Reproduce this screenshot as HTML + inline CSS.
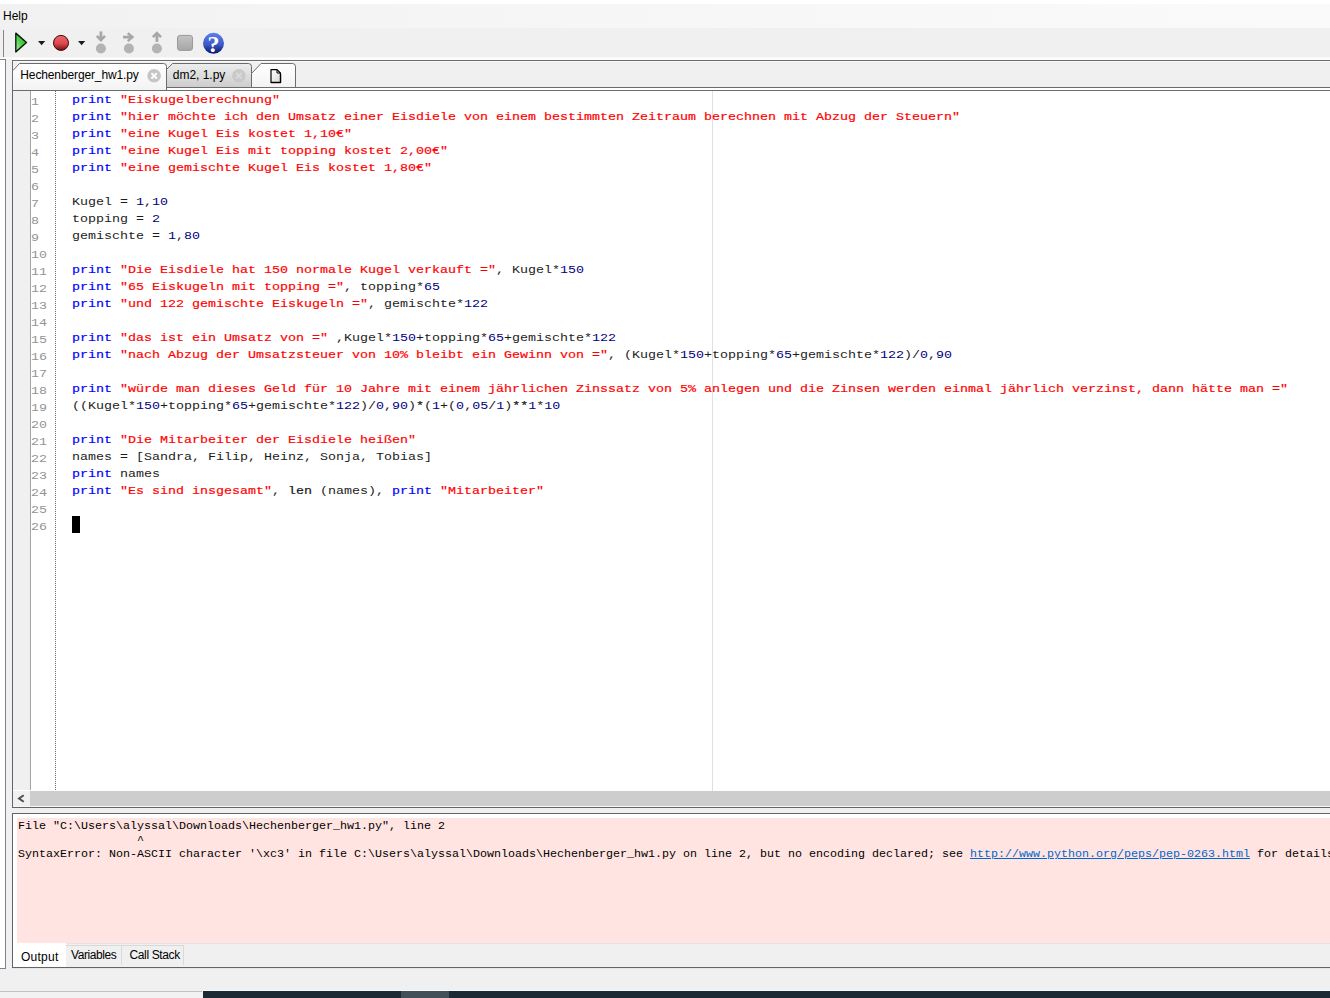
<!DOCTYPE html>
<html lang="de">
<head>
<meta charset="utf-8">
<title>Hechenberger_hw1.py</title>
<style>
*{box-sizing:border-box;margin:0;padding:0}
html,body{width:1330px;height:998px;overflow:hidden;background:#f0f0f0}
body{position:relative;font-family:"Liberation Sans",sans-serif;font-size:12px;color:#000}
.abs{position:absolute}
#topwhite{left:0;top:0;width:1330px;height:4px;background:#fff}
#menubar{left:0;top:4px;width:1330px;height:24px;background:linear-gradient(to right,#f1f1f1 0%,#f6f6f6 40%,#fafafa 100%)}
#menubar span{position:absolute;left:3px;top:5px;font-size:12px;line-height:14px}
#toolbar{left:0;top:28px;width:1330px;height:31px;background:#f0f0f0}
#leftpanel{left:0;top:59px;width:6px;height:910px;background:#fff;border-top:1px solid #7c8290;border-right:1px solid #7c8290;border-bottom:1px solid #7c8290;z-index:5}
/* editor frame */
#edframe{left:12px;top:60px;width:1330px;height:748px;border:1px solid #646464;background:#f0f0f0}
#editor{left:13px;top:91px;width:1317px;height:700px;background:#fff;overflow:hidden}
#edtop{left:13px;top:90px;width:1317px;height:1px;background:#646464}
#gutter{left:0;top:0;width:17px;height:699px;background:#f0f0f0;border-right:0}
#gutline{left:17px;top:0;width:1px;height:699px;background:#a4a4a4}
#dotted{left:42px;top:0;width:1px;height:699px;background:repeating-linear-gradient(to bottom,#6a6a6a 0,#6a6a6a 1px,#fff 1px,#fff 2px)}
#colmark{left:699px;top:0;width:1px;height:700px;background:#e0e0e0}
.ln{position:absolute;left:18px;width:30px;height:17px;margin-top:2px;font:11.5px/17px "Liberation Mono",monospace;color:#949494;white-space:pre;transform:scaleX(1.1593);transform-origin:0 0}
.cl{position:absolute;left:58.5px;height:17px;margin-top:1px;font:11px/17px "Liberation Mono",monospace;color:#1c1c1c;white-space:pre;transform:scaleX(1.2119);transform-origin:0 0}
.k{color:#0000ff;-webkit-text-stroke:.17px #0000ff}
.s{color:#ff0000;-webkit-text-stroke:.17px #ff0000}
.n{color:#000080}
.b{-webkit-text-stroke:.17px #000}
#caret{left:59px;top:425px;width:8px;height:17px;background:#000}
/* hscroll */
#hscroll{left:13px;top:791px;width:1317px;height:15px;background:#cdcdcd}
#hsbtn{left:0;top:0;width:17px;height:15px;background:#f0f0f0}
/* output frame */
#outframe{left:12px;top:813px;width:1330px;height:155px;border:1px solid #646464;background:#fff}
#outpink{left:17px;top:818px;width:1313px;height:125px;background:#ffe4e1}
.ol{position:absolute;left:18.3px;height:14px;font:10px/14px "Liberation Mono",monospace;color:#000;white-space:pre;transform:scaleX(1.1665);transform-origin:0 0}
.ol .lnk{color:#0066cc;text-decoration:underline}
#outtabs{left:13px;top:943px;width:1317px;height:24px;background:#f0f0f0}
#bottomstrip{left:203px;top:991px;width:1127px;height:7px;background:#1c2a35}
</style>
</head>
<body>
<div id="topwhite" class="abs"></div>
<div id="menubar" class="abs"><span>Help</span></div>
<div id="toolbar" class="abs"></div>
<div id="leftpanel" class="abs"></div>
<div id="edframe" class="abs"></div>
<svg id="topsvg" class="abs" style="left:0;top:28px" width="1330" height="63" viewBox="0 28 1330 63">
<defs>
<linearGradient id="gPlay" x1="1" y1="0" x2="0" y2="1"><stop offset="0" stop-color="#26b426"/><stop offset="0.5" stop-color="#46cc46"/><stop offset="1" stop-color="#b8f0b4"/></linearGradient>
<linearGradient id="gRec" x1="0" y1="0" x2="0" y2="1"><stop offset="0" stop-color="#f2666c"/><stop offset="0.55" stop-color="#d9484c"/><stop offset="1" stop-color="#7c0d0d"/></linearGradient>
<linearGradient id="gStop" x1="0" y1="0" x2="0" y2="1"><stop offset="0" stop-color="#c4c4c4"/><stop offset="1" stop-color="#a6a6a6"/></linearGradient>
<linearGradient id="gHelp" x1="0" y1="0" x2="0" y2="1"><stop offset="0" stop-color="#5b7fee"/><stop offset="0.55" stop-color="#3f5cc6"/><stop offset="1" stop-color="#0a126e"/></linearGradient>
<linearGradient id="gTabA" x1="0" y1="0" x2="0" y2="1"><stop offset="0" stop-color="#ffffff"/><stop offset="1" stop-color="#f3f3f3"/></linearGradient>
<linearGradient id="gTabI" x1="0" y1="0" x2="0" y2="1"><stop offset="0" stop-color="#ededed"/><stop offset="1" stop-color="#cdcdcd"/></linearGradient>
<linearGradient id="gPage" x1="0" y1="0" x2="1" y2="1"><stop offset="0" stop-color="#ffffff"/><stop offset="1" stop-color="#d8d8d8"/></linearGradient>
</defs>
<!-- toolbar bottom highlight -->
<rect x="0" y="57" width="1330" height="1" fill="#f8f8f8"/>
<rect x="0" y="58" width="1330" height="1" fill="#ffffff"/>
<rect x="12" y="59" width="1318" height="1" fill="#fafafa"/>
<!-- separator -->
<rect x="3" y="30" width="1" height="27" fill="#858585"/>
<!-- play -->
<path d="M15.8 33.1 L26.5 42.5 L15.8 51.9 Z" fill="url(#gPlay)" stroke="#0e1c0d" stroke-width="1.4" stroke-linejoin="round"/>
<path d="M38 41 L45.2 41 L41.6 45.2 Z" fill="#1c1c1c"/>
<!-- record -->
<circle cx="61" cy="42.9" r="7.5" fill="url(#gRec)" stroke="#3c0b0b" stroke-width="1"/>
<path d="M78 41 L85.2 41 L81.6 45.2 Z" fill="#1c1c1c"/>
<!-- step into -->
<g fill="#a7a7a7">
<rect x="99.5" y="31.4" width="2.8" height="7.2"/>
<path d="M95.9 36.7 L97.7 34.9 L100.9 38.2 L104.1 34.9 L105.9 36.7 L100.9 41.9 Z"/>
<rect x="123" y="35.7" width="7.4" height="2.8"/>
<path d="M128.6 32.2 L134.3 37.1 L128.6 42 L126.9 40.2 L130.4 37.1 L126.9 34 Z"/>
<rect x="155.5" y="34.8" width="2.8" height="7.1"/>
<path d="M156.9 31.3 L161.9 36.3 L160.1 38.1 L156.9 34.9 L153.7 38.1 L151.9 36.3 Z"/>
</g>
<g fill="#b3b3b3"><circle cx="100.9" cy="48.5" r="5"/><circle cx="128.9" cy="48.5" r="5"/><circle cx="156.9" cy="48.5" r="5"/></g>
<!-- stop -->
<rect x="177.5" y="35.4" width="15" height="15" rx="2.6" ry="2.6" fill="url(#gStop)" stroke="#9a9a9a" stroke-width="1"/>
<!-- help -->
<circle cx="213.5" cy="43.3" r="10.5" fill="url(#gHelp)"/>
<text x="213.6" y="51.9" text-anchor="middle" font-family="Liberation Serif, serif" font-weight="bold" font-size="24" fill="#ffffff">?</text>
<!-- frame top + interior -->
<rect x="13" y="61" width="1317" height="27" fill="#f0f0f0"/>
<rect x="13" y="61" width="1317" height="1" fill="#f9f9f9"/>
<rect x="12" y="60" width="1318" height="1" fill="#6c6c6c"/>
<rect x="12" y="60" width="1" height="31" fill="#6c6c6c"/>
<!-- strip under tabs -->
<rect x="13" y="88" width="1317" height="2" fill="#ffffff"/>
<rect x="13" y="87" width="1317" height="1" fill="#6c6c6c"/>
<rect x="13" y="90" width="1317" height="1" fill="#6c6c6c"/>
<!-- inactive tab -->
<path d="M166.5 87.5 L166.5 69.5 L172.5 63.5 L248.5 63.5 Q251.5 63.5 251.5 66.5 L251.5 87.5 Z" fill="url(#gTabI)" stroke="#6c6c6c" stroke-width="1"/>
<!-- new tab -->
<path d="M251.5 87.5 L251.5 73.5 L261 63.5 L292.5 63.5 Q295.5 63.5 295.5 66.5 L295.5 87.5 Z" fill="url(#gTabA)" stroke="#6c6c6c" stroke-width="1"/>
<!-- active tab -->
<path d="M13 90 L13 70.5 L19.5 63.5 L163.5 63.5 Q166.5 63.5 166.5 66.5 L166.5 90 Z" fill="url(#gTabA)"/>
<path d="M13 70.5 L19.5 63.5 L163.5 63.5 Q166.5 63.5 166.5 66.5 L166.5 90" fill="none" stroke="#6c6c6c" stroke-width="1"/>
<!-- tab labels -->
<text id="t1" x="20.3" y="79" font-family="Liberation Sans, sans-serif" font-size="12" fill="#000" textLength="118.5" lengthAdjust="spacing">Hechenberger_hw1.py</text>
<text id="t2" x="172.8" y="79" font-family="Liberation Sans, sans-serif" font-size="12" fill="#000" textLength="52.5" lengthAdjust="spacing">dm2, 1.py</text>
<!-- close icons -->
<circle cx="154.1" cy="75.8" r="6.8" fill="#c6c6c6"/>
<path d="M151.4 73.1 L156.8 78.5 M156.8 73.1 L151.4 78.5" stroke="#ffffff" stroke-width="1.9" stroke-linecap="butt"/>
<circle cx="238.9" cy="75.7" r="6.8" fill="#c9c9c9"/>
<path d="M236.2 73 L241.6 78.4 M241.6 73 L236.2 78.4" stroke="#d9d9d9" stroke-width="1.9" stroke-linecap="butt"/>
<!-- page icon -->
<path d="M271 69.6 L277 69.6 L280.4 73 L280.4 82.4 L271 82.4 Z" fill="url(#gPage)" stroke="#000" stroke-width="1.2" stroke-linejoin="round"/>
<path d="M277 69.6 L277 73 L280.4 73" fill="none" stroke="#000" stroke-width="1"/>
<path d="M271 82.8 L280.8 82.8 L280.8 74" fill="none" stroke="#000" stroke-width="0.8"/>
</svg>
<div id="editor" class="abs">
<div id="gutter" class="abs"></div>
<div id="gutline" class="abs"></div>
<div id="dotted" class="abs"></div>
<div id="colmark" class="abs"></div>
<!--LINES-->
<div class="ln" style="top:0px">1</div>
<div class="cl" style="top:0px"><span class="k">print</span> <span class="s">"Eiskugelberechnung"</span></div>
<div class="ln" style="top:17px">2</div>
<div class="cl" style="top:17px"><span class="k">print</span> <span class="s">"hier möchte ich den Umsatz einer Eisdiele von einem bestimmten Zeitraum berechnen mit Abzug der Steuern"</span></div>
<div class="ln" style="top:34px">3</div>
<div class="cl" style="top:34px"><span class="k">print</span> <span class="s">"eine Kugel Eis kostet 1,10€"</span></div>
<div class="ln" style="top:51px">4</div>
<div class="cl" style="top:51px"><span class="k">print</span> <span class="s">"eine Kugel Eis mit topping kostet 2,00€"</span></div>
<div class="ln" style="top:68px">5</div>
<div class="cl" style="top:68px"><span class="k">print</span> <span class="s">"eine gemischte Kugel Eis kostet 1,80€"</span></div>
<div class="ln" style="top:85px">6</div>
<div class="ln" style="top:102px">7</div>
<div class="cl" style="top:102px">Kugel = <span class="n">1</span>,<span class="n">10</span></div>
<div class="ln" style="top:119px">8</div>
<div class="cl" style="top:119px">topping = <span class="n">2</span></div>
<div class="ln" style="top:136px">9</div>
<div class="cl" style="top:136px">gemischte = <span class="n">1</span>,<span class="n">80</span></div>
<div class="ln" style="top:153px">10</div>
<div class="ln" style="top:170px">11</div>
<div class="cl" style="top:170px"><span class="k">print</span> <span class="s">"Die Eisdiele hat 150 normale Kugel verkauft ="</span>, Kugel*<span class="n">150</span></div>
<div class="ln" style="top:187px">12</div>
<div class="cl" style="top:187px"><span class="k">print</span> <span class="s">"65 Eiskugeln mit topping ="</span>, topping*<span class="n">65</span></div>
<div class="ln" style="top:204px">13</div>
<div class="cl" style="top:204px"><span class="k">print</span> <span class="s">"und 122 gemischte Eiskugeln ="</span>, gemischte*<span class="n">122</span></div>
<div class="ln" style="top:221px">14</div>
<div class="ln" style="top:238px">15</div>
<div class="cl" style="top:238px"><span class="k">print</span> <span class="s">"das ist ein Umsatz von ="</span> ,Kugel*<span class="n">150</span>+topping*<span class="n">65</span>+gemischte*<span class="n">122</span></div>
<div class="ln" style="top:255px">16</div>
<div class="cl" style="top:255px"><span class="k">print</span> <span class="s">"nach Abzug der Umsatzsteuer von 10% bleibt ein Gewinn von ="</span>, (Kugel*<span class="n">150</span>+topping*<span class="n">65</span>+gemischte*<span class="n">122</span>)/<span class="n">0</span>,<span class="n">90</span></div>
<div class="ln" style="top:272px">17</div>
<div class="ln" style="top:289px">18</div>
<div class="cl" style="top:289px"><span class="k">print</span> <span class="s">"würde man dieses Geld für 10 Jahre mit einem jährlichen Zinssatz von 5% anlegen und die Zinsen werden einmal jährlich verzinst, dann hätte man ="</span></div>
<div class="ln" style="top:306px">19</div>
<div class="cl" style="top:306px">((Kugel*<span class="n">150</span>+topping*<span class="n">65</span>+gemischte*<span class="n">122</span>)/<span class="n">0</span>,<span class="n">90</span>)<span class="b">*</span>(<span class="n">1</span>+(<span class="n">0</span>,<span class="n">05</span>/<span class="n">1</span>)<span class="b">**</span><span class="n">1</span>*<span class="n">10</span></div>
<div class="ln" style="top:323px">20</div>
<div class="ln" style="top:340px">21</div>
<div class="cl" style="top:340px"><span class="k">print</span> <span class="s">"Die Mitarbeiter der Eisdiele heißen"</span></div>
<div class="ln" style="top:357px">22</div>
<div class="cl" style="top:357px">names = [Sandra, Filip, Heinz, Sonja, Tobias]</div>
<div class="ln" style="top:374px">23</div>
<div class="cl" style="top:374px"><span class="k">print</span> names</div>
<div class="ln" style="top:391px">24</div>
<div class="cl" style="top:391px"><span class="k">print</span> <span class="s">"Es sind insgesamt"</span>, <span class="b">len</span> (names), <span class="k">print</span> <span class="s">"Mitarbeiter"</span></div>
<div class="ln" style="top:408px">25</div>
<div class="ln" style="top:425px">26</div>
<!--/LINES-->
<div id="caret" class="abs"></div>
</div>
<div class="abs" style="left:13px;top:806px;width:1317px;height:1px;background:#f8f8f8"></div>
<div id="hscroll" class="abs"><div id="hsbtn" class="abs"><svg width="17" height="15" viewBox="0 0 17 15" style="position:absolute;left:0;top:0"><path d="M10.7 4.2 L6 7.5 L10.7 10.8" fill="none" stroke="#4e4e4e" stroke-width="2"/></svg></div></div>
<div id="outframe" class="abs"></div>
<div id="outpink" class="abs"></div>
<!--OUTPUT-->
<div class="ol" style="top:820px">File "C:\Users\alyssal\Downloads\Hechenberger_hw1.py", line 2</div>
<div class="ol" style="top:834px">                 ^</div>
<div class="ol" style="top:848px">SyntaxError: Non-ASCII character '\xc3' in file C:\Users\alyssal\Downloads\Hechenberger_hw1.py on line 2, but no encoding declared; see <span class="lnk">http://www.python.org/peps/pep-0263.html</span> for details</div>
<!--/OUTPUT-->
<div id="outtabs" class="abs">
<div class="abs" style="left:0;top:0;width:53px;height:24px;background:#fff"></div>
<div class="abs" style="left:53px;top:2px;width:56px;height:20px;background:#f0f0f0;border:1px solid #d9d9d9;border-left:0;border-bottom:0"></div>
<div class="abs" style="left:109px;top:2px;width:62px;height:20px;background:#f0f0f0;border:1px solid #d9d9d9;border-left:0;border-bottom:0"></div>
<div class="abs" style="left:53px;top:0;width:1264px;height:1px;background:#e4e4e4"></div>
<span class="abs" style="left:8px;top:7px;font-size:12px;line-height:14px;white-space:pre;letter-spacing:.25px" id="ot1">Output</span>
<span class="abs" style="left:58px;top:5px;font-size:12px;line-height:14px;white-space:pre;letter-spacing:-.42px" id="ot2">Variables</span>
<span class="abs" style="left:116.5px;top:5px;font-size:12px;line-height:14px;white-space:pre;letter-spacing:-.37px" id="ot3">Call Stack</span>
</div>
<div class="abs" style="left:0;top:991px;width:202px;height:1px;background:#c2c2c2"></div>
<div class="abs" style="left:0;top:992px;width:203px;height:6px;background:#f2f2f2"></div>
<div class="abs" style="left:203px;top:990px;width:1127px;height:1px;background:#fafafa"></div>
<div id="bottomstrip" class="abs"></div>
<div class="abs" style="left:12px;top:968px;width:1318px;height:1px;background:#e6e6e6"></div>
<div class="abs" style="left:401px;top:991px;width:48px;height:7px;background:#43505a"></div>
</body>
</html>
